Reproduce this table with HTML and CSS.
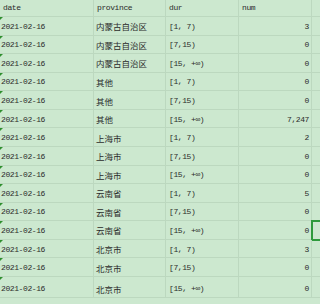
FILE: index.html
```html
<!DOCTYPE html>
<html>
<head>
<meta charset="utf-8">
<link rel="stylesheet" href="styles.css">
</head>
<body>
<div class="sheet">
  <div class="row head"><div class="c">date</div><div class="c">province</div><div class="c">dur</div><div class="c">num</div><div class="c x"></div></div>
  <div class="row"><div class="c d">2021-02-16</div><div class="c p">内蒙古自治区</div><div class="c">[1, 7)</div><div class="c n">3</div><div class="c x"></div></div>
  <div class="row"><div class="c d">2021-02-16</div><div class="c p">内蒙古自治区</div><div class="c">[7,15)</div><div class="c n">0</div><div class="c x"></div></div>
  <div class="row"><div class="c d">2021-02-16</div><div class="c p">内蒙古自治区</div><div class="c">[15, +∞)</div><div class="c n">0</div><div class="c x"></div></div>
  <div class="row"><div class="c d">2021-02-16</div><div class="c p">其他</div><div class="c">[1, 7)</div><div class="c n">0</div><div class="c x"></div></div>
  <div class="row"><div class="c d">2021-02-16</div><div class="c p">其他</div><div class="c">[7,15)</div><div class="c n">0</div><div class="c x"></div></div>
  <div class="row"><div class="c d">2021-02-16</div><div class="c p">其他</div><div class="c">[15, +∞)</div><div class="c n">7,247</div><div class="c x"></div></div>
  <div class="row"><div class="c d">2021-02-16</div><div class="c p">上海市</div><div class="c">[1, 7)</div><div class="c n">2</div><div class="c x"></div></div>
  <div class="row"><div class="c d">2021-02-16</div><div class="c p">上海市</div><div class="c">[7,15)</div><div class="c n">0</div><div class="c x"></div></div>
  <div class="row"><div class="c d">2021-02-16</div><div class="c p">上海市</div><div class="c">[15, +∞)</div><div class="c n">0</div><div class="c x"></div></div>
  <div class="row"><div class="c d">2021-02-16</div><div class="c p">云南省</div><div class="c">[1, 7)</div><div class="c n">5</div><div class="c x"></div></div>
  <div class="row"><div class="c d">2021-02-16</div><div class="c p">云南省</div><div class="c">[7,15)</div><div class="c n">0</div><div class="c x"></div></div>
  <div class="row"><div class="c d">2021-02-16</div><div class="c p">云南省</div><div class="c">[15, +∞)</div><div class="c n">0</div><div class="c x sel"></div></div>
  <div class="row"><div class="c d">2021-02-16</div><div class="c p">北京市</div><div class="c">[1, 7)</div><div class="c n">3</div><div class="c x"></div></div>
  <div class="row"><div class="c d">2021-02-16</div><div class="c p">北京市</div><div class="c">[7,15)</div><div class="c n">0</div><div class="c x"></div></div>
  <div class="row last"><div class="c d">2021-02-16</div><div class="c p">北京市</div><div class="c">[15, +∞)</div><div class="c n">0</div><div class="c x"></div></div>
</div>
</body>
</html>
```
FILE: styles.css
```css
html, body {
  margin: 0;
  padding: 0;
  background: #cce8cf;
}
body {
  width: 320px;
  height: 304px;
  overflow: hidden;
  font-family: "Liberation Mono", "Noto Sans CJK SC", monospace;
  font-size: 8px;
  letter-spacing: -0.4px;
  color: #2b2b2b;
}
.sheet {
  display: flex;
  flex-direction: column;
}
.row {
  display: grid;
  grid-template-columns: 94px 72px 73px 73px 1fr;
  height: 18.57px;
  box-sizing: border-box;
  border-bottom: 1px solid #bcd8bf;
}
.row.head {
  height: 17px;
}
.row.last {
  height: 21px;
}
.c {
  position: relative;
  display: flex;
  align-items: center;
  padding: 2px 0 0 3px;
  line-height: 10px;
  border-right: 1px solid #bcd8bf;
  white-space: nowrap;
  overflow: visible;
}
.head .c {
  padding-top: 0;
}
.c.d {
  padding-left: 1px;
}
.c.p {
  font-family: "Noto Sans CJK SC", sans-serif;
  font-size: 8.5px;
  letter-spacing: 0;
  padding-left: 2px;
  padding-top: 1px;
}
.c.n {
  justify-content: flex-end;
  padding-right: 2px;
}
.last .c {
  padding-top: 4px;
}
.c.x {
  border-right: none;
}
.c.d::before {
  content: "";
  position: absolute;
  left: 0;
  top: 0;
  border-top: 3px solid #2f8f2f;
  border-right: 3px solid transparent;
}
.c.sel::after {
  content: "";
  position: absolute;
  left: -1px;
  top: -1px;
  right: -4px;
  bottom: -2px;
  border: 2px solid #2e9a3c;
}
```
